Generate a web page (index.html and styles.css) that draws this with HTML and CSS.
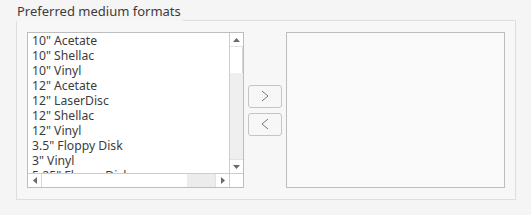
FILE: index.html
```html
<!DOCTYPE html>
<html>
<head>
<meta charset="utf-8">
<link rel="stylesheet" href="styles.css">
</head>
<body>
<div class="group">
  <div class="group-head">
    <span class="group-title">Preferred medium formats</span>
    <span class="group-line"></span>
  </div>
  <div class="group-body">
    <div class="list list-left">
      <ul class="items">
        <li>10" Acetate</li>
        <li>10" Shellac</li>
        <li>10" Vinyl</li>
        <li>12" Acetate</li>
        <li>12" LaserDisc</li>
        <li>12" Shellac</li>
        <li>12" Vinyl</li>
        <li>3.5" Floppy Disk</li>
        <li>3" Vinyl</li>
        <li>5.25" Floppy Disk</li>
      </ul>
      <div class="vscroll">
        <div class="sb-btn sb-up"><svg width="7" height="4" viewBox="0 0 7 4"><path d="M0 4 L3.5 0 L7 4 Z" fill="#6a6a6a"/></svg></div>
        <div class="vthumb"></div>
        <div class="vtrough"></div>
        <div class="sb-btn sb-down"><svg width="7" height="4" viewBox="0 0 7 4"><path d="M0 0 L3.5 4 L7 0 Z" fill="#6a6a6a"/></svg></div>
      </div>
      <div class="hscroll">
        <div class="sb-btn sb-left"><svg width="4" height="7" viewBox="0 0 4 7"><path d="M4 0 L0 3.5 L4 7 Z" fill="#6a6a6a"/></svg></div>
        <div class="hthumb"></div>
        <div class="htrough"></div>
        <div class="sb-btn sb-right"><svg width="4" height="7" viewBox="0 0 4 7"><path d="M0 0 L4 3.5 L0 7 Z" fill="#6a6a6a"/></svg></div>
      </div>
      <div class="corner"></div>
    </div>
    <div class="moves">
      <button class="move" type="button"><svg width="10" height="12" viewBox="0 0 10 12"><path d="M2 1 L8 6 L2 11" fill="none" stroke="#7a7a7a" stroke-width="1"/></svg></button>
      <button class="move" type="button"><svg width="10" height="12" viewBox="0 0 10 12"><path d="M8 1 L2 6 L8 11" fill="none" stroke="#7a7a7a" stroke-width="1"/></svg></button>
    </div>
    <div class="list list-right"></div>
  </div>
</div>
</body>
</html>
```

FILE: styles.css
```css
html, body {
  margin: 0;
  padding: 0;
  background: #f5f5f5;
}
body {
  font-family: "Noto Sans", "DejaVu Sans", sans-serif;
  font-size: 13px;
  color: #3c3c3c;
}
.group {
  margin-left: 16px;
  width: 500px;
}
.group-head {
  display: flex;
  align-items: flex-end;
  height: 21px;
}
.group-title {
  line-height: 22px;
  padding-left: 1px;
  padding-right: 2px;
  font-size: 13px;
  align-self: stretch;
}
.group-line {
  flex: 1;
  border-top: 1px solid #dedede;
  border-right: 1px solid #dedede;
  height: 0;
}
.group-body {
  display: flex;
  align-items: center;
  border: 1px solid #dedede;
  border-top: none;
  background: #f7f7f7;
  padding: 11px 10px 11px 10px;
  gap: 4px;
}
.list {
  box-sizing: border-box;
  height: 156px;
  border: 1px solid #bdbdbd;
}
.list-left {
  width: 217px;
  background: #ffffff;
  display: grid;
  grid-template-columns: 1fr 14px;
  grid-template-rows: 1fr 14px;
  overflow: hidden;
}
.list-right {
  width: 219px;
  background: #fafafa;
}
.items {
  list-style: none;
  margin: 0;
  padding: 0 0 0 4px;
  overflow: hidden;
  font-size: 12.2px;
  line-height: 15px;
  white-space: nowrap;
}
.vscroll {
  display: flex;
  flex-direction: column;
  border-left: 1px solid #cdcdcd;
  background: #efefef;
}
.sb-btn {
  display: flex;
  align-items: center;
  justify-content: center;
  background: #ffffff;
  flex: none;
}
.sb-up, .sb-down {
  height: 13px;
}
.sb-up {
  border-bottom: 1px solid #e2e2e2;
}
.vthumb {
  height: 26px;
  background: #ffffff;
  border-right: 1px solid #d6d6d6;
}
.vtrough {
  flex: 1;
  background: #efefef;
}
.sb-down {
  border-top: 1px solid #e2e2e2;
}
.hscroll {
  display: flex;
  border-top: 1px solid #cdcdcd;
  background: #efefef;
}
.sb-left, .sb-right {
  width: 13px;
}
.sb-left {
  border-right: 1px solid #d6d6d6;
}
.sb-right {
  border-left: 1px solid #e2e2e2;
}
.hthumb {
  width: 145px;
  background: #ffffff;
}
.htrough {
  flex: 1;
  background: #ececec;
}
.corner {
  border-top: 1px solid #cdcdcd;
  border-left: 1px solid #cdcdcd;
  background: #ffffff;
}
.moves {
  display: flex;
  flex-direction: column;
  gap: 5px;
}
.move {
  box-sizing: border-box;
  width: 34px;
  height: 23px;
  margin: 0;
  padding: 0;
  border: 1px solid #c4c4c4;
  border-radius: 3px;
  background: #f7f7f7;
  display: flex;
  align-items: center;
  justify-content: center;
}
```
